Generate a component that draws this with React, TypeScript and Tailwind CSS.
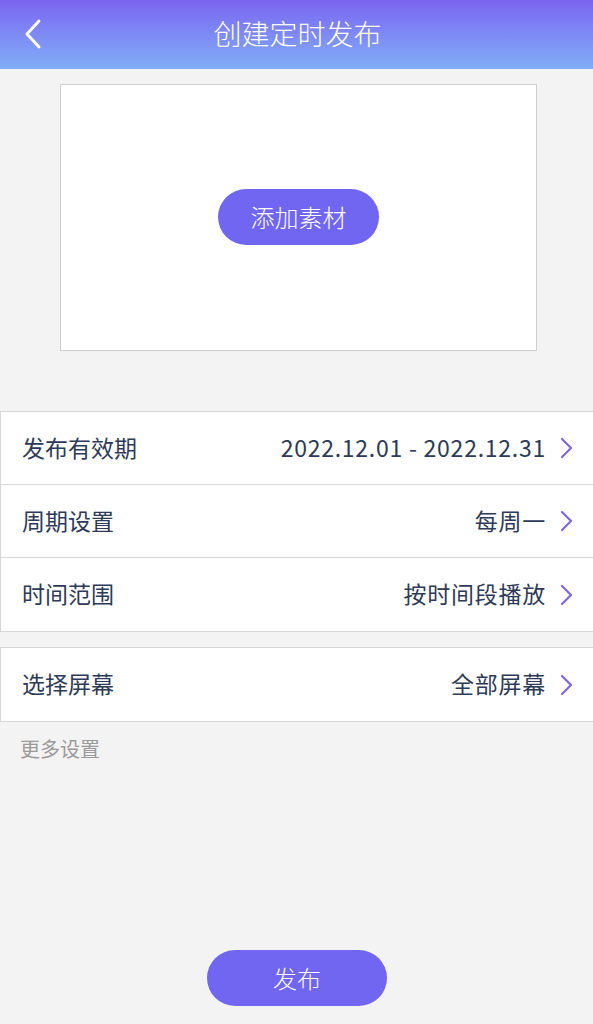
import React from "react";

const font = { fontFamily: '"Noto Sans CJK SC", "Noto Sans", sans-serif' };

function Chevron() {
  return (
    <svg width="13" height="22" viewBox="0 0 13 22" fill="none" className="shrink-0">
      <path d="M2 2 L11 11 L2 20" stroke="#7b68ee" strokeWidth="2.2" strokeLinecap="round" strokeLinejoin="round" />
    </svg>
  );
}

function Row({ label, value, last }: { label: string; value: string; last?: boolean }) {
  return (
    <div className={`flex items-center h-[73px] pl-[21px] pr-[20px] ${last ? "" : "border-b border-[#d6d6d6]"}`}>
      <span className="text-[23px] text-[#2d3a58] flex-1 -mt-[2px]">{label}</span>
      <span className="text-[23px] text-[#2d3a58] mr-[14px] tracking-[0.75px] -mt-[2px]">{value}</span>
      <Chevron />
    </div>
  );
}

export default function App() {
  return (
    <div className="w-[593px] h-[1024px] bg-[#f3f3f3] flex flex-col" style={font}>
      <div className="h-[69px] shrink-0 bg-gradient-to-b from-[#7a64f1] to-[#80adf7] flex items-center relative">
        <svg className="absolute left-[22px] top-[18px]" width="22" height="32" viewBox="0 0 22 32" fill="none">
          <path d="M17 3 L5 16 L17 29" stroke="white" strokeWidth="3" strokeLinecap="round" strokeLinejoin="round" />
        </svg>
        <div className="w-full text-center text-white text-[28px] font-light leading-none -mt-[4px] pl-[2px]">创建定时发布</div>
      </div>

      <div className="mt-[15px] ml-[60px] mr-[56px] h-[267px] bg-white border border-[#cfcfcf] flex items-start justify-center">
        <button className="mt-[104px] w-[161px] h-[56px] rounded-full bg-[#7066f2] text-white text-[24px] font-light">添加素材</button>
      </div>

      <div className="mt-[60px] bg-white border-y border-l border-[#d6d6d6]">
        <Row label="发布有效期" value="2022.12.01 - 2022.12.31" />
        <Row label="周期设置" value="每周一" />
        <Row label="时间范围" value="按时间段播放" last />
      </div>

      <div className="mt-[15px] bg-white border-y border-l border-[#d6d6d6]">
        <Row label="选择屏幕" value="全部屏幕" last />
      </div>

      <div className="pl-[20px] mt-[12px] text-[20px] text-[#9a9a9a]">更多设置</div>

      <div className="flex-1" />
      <div className="flex justify-center mb-[18px] pl-[1px]">
        <button className="w-[180px] h-[56px] rounded-full bg-[#7066f2] text-white text-[24px] font-light">发布</button>
      </div>
    </div>
  );
}
